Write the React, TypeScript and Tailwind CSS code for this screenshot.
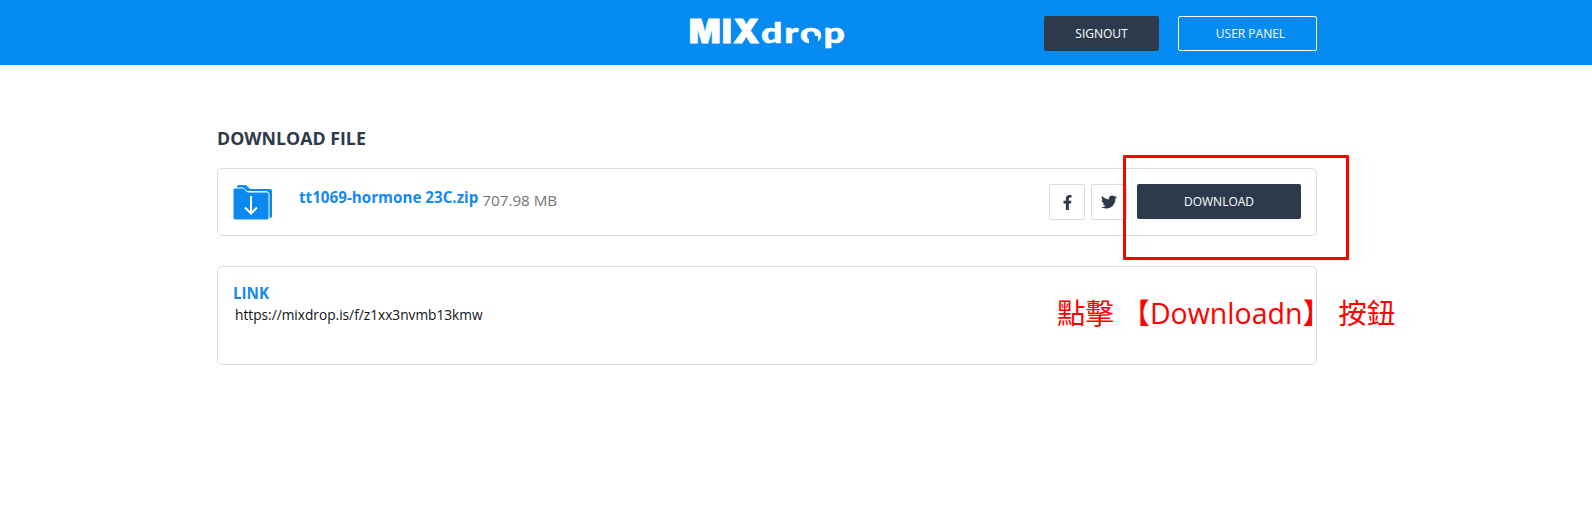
import React from 'react';
import { FaFacebookF, FaTwitter } from 'react-icons/fa';

const FolderIcon: React.FC = () => (
  <svg width="40" height="35" viewBox="0 0 40 35" className="shrink-0">
    <path d="M4 2a2 2 0 0 1 2-2h7l4 4h20a2 2 0 0 1 2 2v25a2 2 0 0 1-2 2h-3V6H4z" fill="#0a8af0" />
    <path d="M0 5a2 2 0 0 1 2-2h8.500l4 4H34a2 2 0 0 1 2 2v24a2 2 0 0 1-2 2H2a2 2 0 0 1-2-2z" fill="#0a8af0" stroke="#fff" strokeWidth="1" />
    <path d="M18 11v17M12 22.500l6 6 6-6" fill="none" stroke="#fff" strokeWidth="2" />
  </svg>
);

const App: React.FC = () => {
  return (
    <div className="relative h-[506px] bg-white font-['Open_Sans','Noto_Sans_CJK_TC',sans-serif] overflow-hidden">
      <header className="h-[65px] bg-[#068bf2] pl-[217px]">
        <div className="w-[1100px] h-full flex items-center">
          <div className="relative ml-[472px] w-[157px] flex items-baseline text-white leading-none -mt-[2px]">
            <span className="font-['Inter',sans-serif] text-[33px] font-black tracking-[1.5px] [-webkit-text-stroke:1px_white]">MIX</span>
            <span className="inline-block origin-left scale-x-[1.29] font-['Lato',sans-serif] text-[29px] font-black tracking-[1.5px] [-webkit-text-stroke:0.5px_white]">drop</span>
            <div className="absolute left-[120px] top-[21px] w-[9px] h-[8px] bg-[#068bf2]" />
          </div>
          <button className="mt-[1px] ml-[198px] w-[115px] h-[35px] pt-[2px] rounded-[2px] bg-[#2d3a4b] text-white text-[12px] uppercase">Signout</button>
          <button className="mt-[1px] ml-[19px] w-[139px] h-[35px] pt-[2px] pl-[6px] rounded-[2px] border border-white text-white text-[12px] uppercase">User Panel</button>
        </div>
      </header>

      <main className="ml-[217px] w-[1100px] pt-[61px]">
        <h2 className="text-[17.800px] leading-[24px] font-bold text-[#2d3a4b] uppercase">Download file</h2>

        <section className="mt-[18px] h-[68px] rounded-[5px] border border-[#dcdcdc] flex items-center pl-[15px] pr-[15px]">
          <FolderIcon />
          <div className="ml-[26px] flex items-start -mt-[7px]">
            <a className="text-[15.200px] leading-[20px] font-bold text-[#1589f0]">tt1069-hormone 23C.zip</a>
            <span className="ml-[4px] mt-[3px] text-[15.200px] leading-[20px] text-[#757575]">707.98 MB</span>
          </div>
          <div className="ml-auto flex items-center">
            <button className="w-[36px] h-[36px] rounded-[2px] border border-[#dcdcdc] flex items-center justify-center text-[#2d3a4b]">
              <FaFacebookF size={15} />
            </button>
            <button className="ml-[6px] w-[36px] h-[36px] rounded-[2px] border border-[#dcdcdc] flex items-center justify-center text-[#2d3a4b]">
              <FaTwitter size={16} />
            </button>
            <button className="ml-[10px] w-[164px] h-[35px] -mt-[1px] rounded-[2px] bg-[#2d3a4b] text-white text-[12px] uppercase">Download</button>
          </div>
        </section>

        <section className="mt-[30px] h-[99px] rounded-[5px] border border-[#dcdcdc] pl-[15px] pt-[16px]">
          <div className="text-[15.200px] leading-[20px] font-bold text-[#1589f0] uppercase">Link</div>
          <div className="ml-[2px] mt-[2px] text-[13.700px] leading-[20px] text-[#111]">https://mixdrop.is/f/z1xx3nvmb13kmw</div>
        </section>
      </main>

      {/* annotation drawn over the page */}
      <div className="absolute left-[1123px] top-[155px] w-[226px] h-[105px] border-[3px] border-[#ff0000] rounded-[1px]" />
      <div className="absolute left-[1057px] top-[294px] text-[28.500px] leading-[38px] text-[#ff0000] whitespace-nowrap">點擊 【Downloadn】 按鈕</div>
    </div>
  );
};

export default App;
